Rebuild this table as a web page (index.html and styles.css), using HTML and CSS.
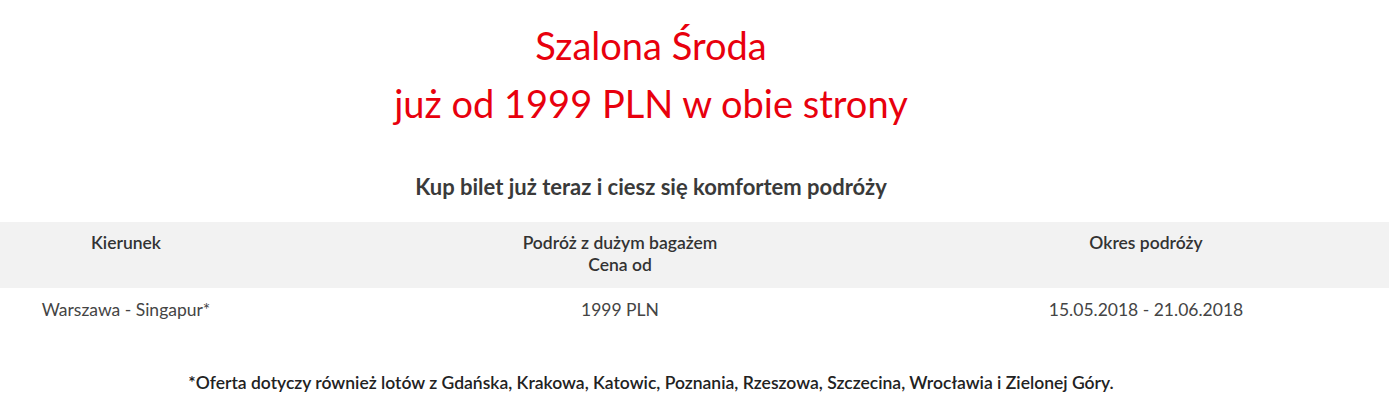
FILE: index.html
```html
<!DOCTYPE html>
<html lang="pl">
<head>
<meta charset="utf-8">
<link rel="stylesheet" href="styles.css">
</head>
<body>
<div class="page">
  <div class="hero">
    <h1 class="title">Szalona Środa</h1>
    <h1 class="title second">już od 1999 PLN w obie strony</h1>
    <h2 class="lead">Kup bilet już teraz i ciesz się komfortem podróży</h2>
  </div>
  <div class="table">
    <div class="row head">
      <div class="cell">Kierunek</div>
      <div class="cell">Podróż z dużym bagażem<br>Cena od</div>
      <div class="cell">Okres podróży</div>
      <div class="cell"></div>
    </div>
    <div class="row body">
      <div class="cell">Warszawa - Singapur*</div>
      <div class="cell">1999 PLN</div>
      <div class="cell">15.05.2018 - 21.06.2018</div>
      <div class="cell"></div>
    </div>
  </div>
  <p class="note">*Oferta dotyczy również lotów z Gdańska, Krakowa, Katowic, Poznania, Rzeszowa, Szczecina, Wrocławia i Zielonej Góry.</p>
</div>
</body>
</html>
```
FILE: styles.css
```css
html, body {
  margin: 0;
  padding: 0;
  background: #ffffff;
}
body {
  font-family: Lato, "Open Sans", "Liberation Sans", sans-serif;
  color: #3a3a3a;
}
.hero {
  width: 1302px;
  text-align: center;
  padding-top: 20px;
}
.title {
  margin: 0;
  font-size: 38px;
  font-weight: 400;
  color: #e8000d;
  line-height: 50px;
}
.title.second {
  margin-top: 8px;
}
.lead {
  margin: 44px 0 0;
  font-size: 22px;
  font-weight: 700;
  line-height: 30px;
  color: #3a3a3a;
}
.table {
  margin-top: 20px;
}
.row {
  display: grid;
  grid-template-columns: 252px 736px 316px 1fr;
  text-align: center;
}
.row.head {
  background: #f2f2f2;
  height: 66px;
  box-sizing: border-box;
  padding-top: 10px;
  font-size: 17.5px;
  font-weight: 600;
  line-height: 22px;
  color: #333;
}
.row.body {
  padding-top: 11px;
  font-size: 17.5px;
  line-height: 22px;
  color: #444;
}
.note {
  width: 1302px;
  text-align: center;
  margin: 51px 0 0;
  font-size: 17.5px;
  font-weight: 600;
  line-height: 22px;
  color: #222;
}
```
